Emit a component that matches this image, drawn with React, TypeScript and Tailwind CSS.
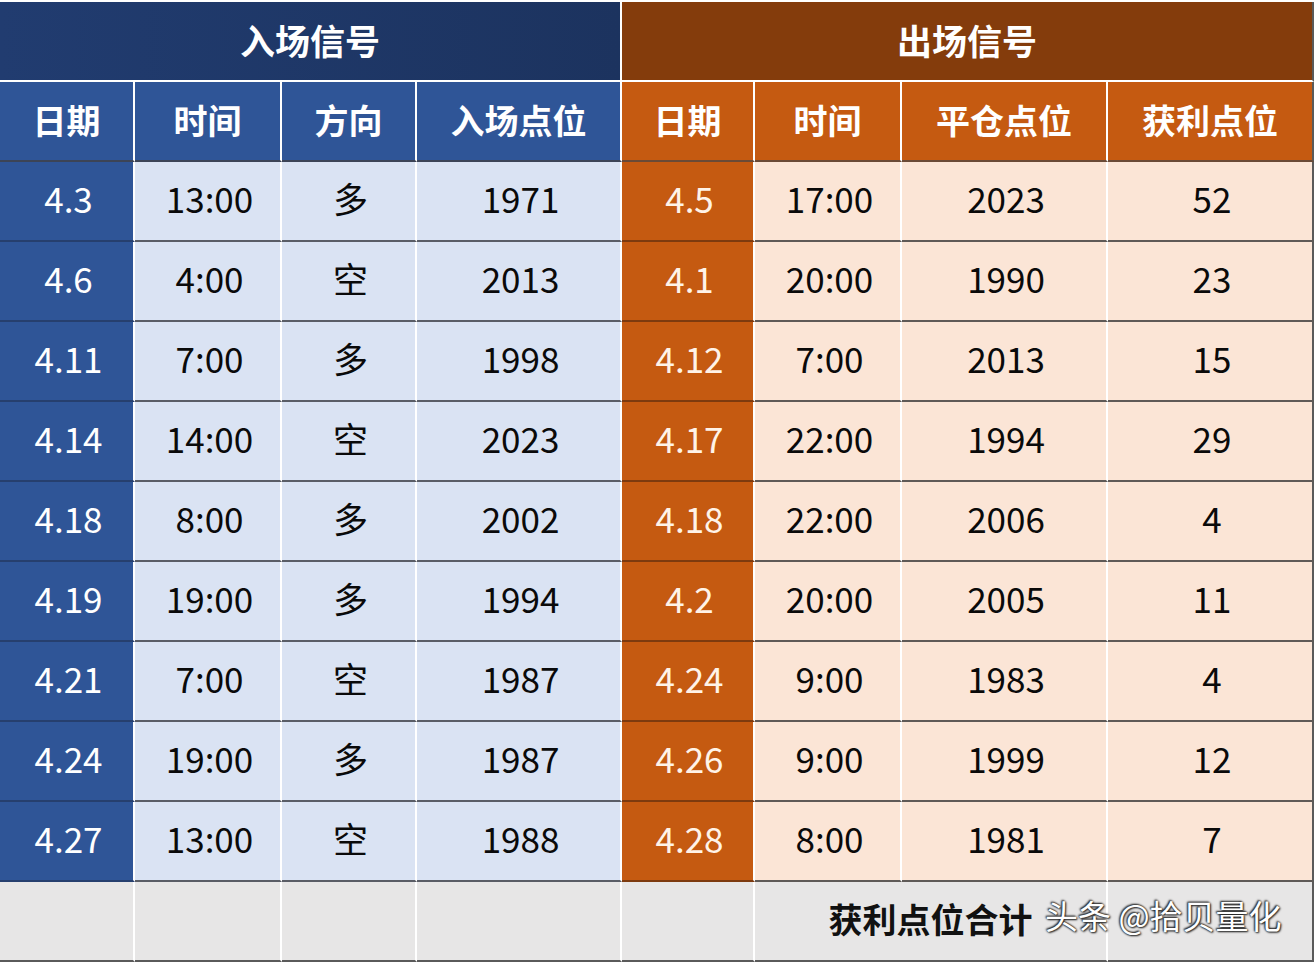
import React from 'react'

const FONT = { fontFamily: '"Noto Sans CJK SC", "Noto Sans", sans-serif' }

const COLS = 'grid grid-cols-[135px_147px_135px_205px_133px_147px_206px_206px]'

type Row = [string, string, string, string, string, string, string, string]

const ROWS: Row[] = [
  ['4.3', '13:00', '多', '1971', '4.5', '17:00', '2023', '52'],
  ['4.6', '4:00', '空', '2013', '4.1', '20:00', '1990', '23'],
  ['4.11', '7:00', '多', '1998', '4.12', '7:00', '2013', '15'],
  ['4.14', '14:00', '空', '2023', '4.17', '22:00', '1994', '29'],
  ['4.18', '8:00', '多', '2002', '4.18', '22:00', '2006', '4'],
  ['4.19', '19:00', '多', '1994', '4.2', '20:00', '2005', '11'],
  ['4.21', '7:00', '空', '1987', '4.24', '9:00', '1983', '4'],
  ['4.24', '19:00', '多', '1987', '4.26', '9:00', '1999', '12'],
  ['4.27', '13:00', '空', '1988', '4.28', '8:00', '1981', '7'],
]

const ENTRY_HEAD = ['日期', '时间', '方向', '入场点位']
const EXIT_HEAD = ['日期', '时间', '平仓点位', '获利点位']

const cellBase = 'h-[80px] flex items-center justify-center border-r-2 border-b-2 text-[34px]'

function dataCellClass(i: number) {
  const last = i === 7 ? 'border-r-[#5a5a5a]' : 'border-r-white'
  const base = `${cellBase} pb-[6px] pl-[4px] text-[35px] ${last}`
  if (i === 0) return `${base} bg-[#2f5597] border-b-[#263f6e] text-white`
  if (i === 4) return `${base} bg-[#c55a11] border-b-[#7d3a0e] text-[#fff3e8]`
  if (i < 4) return `${base} bg-[#dae3f3] border-b-[#5a5d66] text-[#0a0a0a]`
  return `${base} bg-[#fbe5d6] border-b-[#5f5a57] text-[#0a0a0a]`
}

export default function App() {
  return (
    <div className="w-[1314px] h-[962px] overflow-hidden bg-white relative" style={FONT}>
      <div className="h-[2px] bg-white" />
      {/* title row */}
      <div className="grid grid-cols-[622px_692px] h-[80px]">
        <div className="border-r-2 border-b-2 border-white bg-gradient-to-r from-[#213c70] to-[#1c335f] flex items-center justify-center pb-[2px] text-white text-[35px] font-bold">
          入场信号
        </div>
        <div className="border-r-2 border-b-2 border-b-white border-r-[#5a5a5a] bg-[#843c0c] flex items-center justify-center pb-[2px] text-white text-[35px] font-bold">
          出场信号
        </div>
      </div>
      {/* header row */}
      <div className={COLS}>
        {ENTRY_HEAD.map((h, i) => (
          <div
            key={`e${i}`}
            className={`${cellBase} pb-[4px] border-r-white border-b-[#3c4456] bg-[#2f5597] text-white font-bold`}
          >
            {h}
          </div>
        ))}
        {EXIT_HEAD.map((h, i) => (
          <div
            key={`x${i}`}
            className={`${cellBase} pb-[4px] ${i === 3 ? 'border-r-[#5a5a5a]' : 'border-r-white'} border-b-[#6a4a36] bg-[#c55a11] text-white font-bold`}
          >
            {h}
          </div>
        ))}
      </div>
      {/* data rows */}
      {ROWS.map((row, r) => (
        <div key={r} className={COLS}>
          {row.map((v, i) => (
            <div key={i} className={dataCellClass(i)}>
              {v}
            </div>
          ))}
        </div>
      ))}
      {/* footer */}
      <div className="grid grid-cols-[135px_147px_135px_205px_133px_353px_206px]">
        {[0, 1, 2, 3, 4].map((i) => (
          <div key={i} className="h-[80px] border-r-2 border-b-2 border-r-white border-b-[#5a5a5a] bg-[#e7e6e6]" />
        ))}
        <div className="h-[80px] border-r-2 border-b-2 border-r-white border-b-[#5a5a5a] bg-[#e7e6e6] flex items-center justify-center pb-[6px] text-[34px] font-bold text-[#111111]">
          获利点位合计
        </div>
        <div className="h-[80px] border-r-2 border-b-2 border-r-[#5a5a5a] border-b-[#5a5a5a] bg-[#e7e6e6]" />
      </div>
      <div className="absolute left-[1045px] top-[899px] text-[33px] text-white leading-none [text-shadow:0_0_2px_#222,1px_1px_2px_#222,-1px_-1px_2px_#222]">
        头条 @拾贝量化
      </div>
    </div>
  )
}
